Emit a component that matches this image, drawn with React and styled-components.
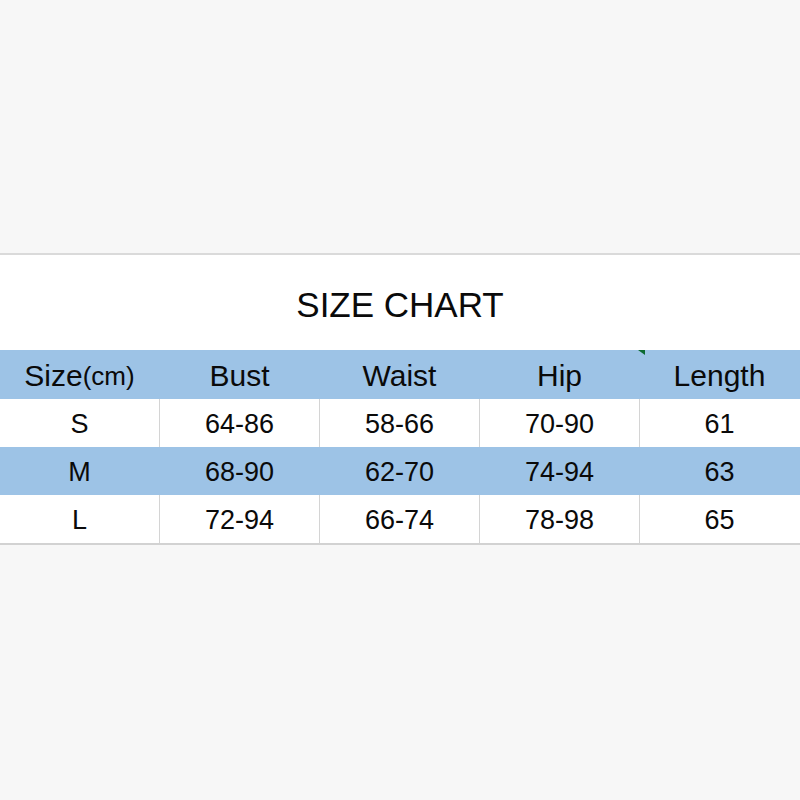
import React from "react";
import styled, { createGlobalStyle } from "styled-components";

const Global = createGlobalStyle`
  body {
    margin: 0;
    background: #f7f7f7;
    font-family: "Liberation Sans", Arial, sans-serif;
    color: #0a0a0a;
  }
`;

const Page = styled.div`
  padding-top: 253px;
  min-height: 800px;
  box-sizing: border-box;
`;

const Panel = styled.div`
  background: #fff;
  border-top: 2px solid #dadada;
  border-bottom: 2px solid #d2d2d2;
`;

const Title = styled.div`
  height: 95px;
  display: flex;
  align-items: center;
  justify-content: center;
  font-size: 35px;
  padding-top: 5px;
  box-sizing: border-box;
`;

const Table = styled.div`
  display: grid;
  grid-template-columns: repeat(5, 160px);
`;

const Row = styled.div`
  display: contents;
`;

const Cell = styled.div`
  position: relative;
  height: ${p => (p.head ? 49 : 48)}px;
  display: flex;
  align-items: center;
  justify-content: center;
  padding-top: 3px;
  font-size: ${p => (p.head ? 30 : 27)}px;
  background: ${p => (p.blue ? "#9dc3e6" : "#fff")};
  border-right: 1px solid
    ${p => (p.blue || p.last ? "transparent" : "#d4d4d4")};
  box-sizing: border-box;
`;

const Small = styled.span`
  font-size: 26px;
`;

const Marker = styled.div`
  position: absolute;
  top: 0;
  left: -2px;
  width: 0;
  height: 0;
  border-top: 5px solid #0c6a32;
  border-left: 7px solid transparent;
`;

const head = ["Size", "Bust", "Waist", "Hip", "Length"];

const rows = [
  ["S", "64-86", "58-66", "70-90", "61"],
  ["M", "68-90", "62-70", "74-94", "63"],
  ["L", "72-94", "66-74", "78-98", "65"]
];

const App = () => (
  <Page>
    <Global />
    <Panel>
      <Title>SIZE CHART</Title>
      <Table>
        <Row>
          {head.map((h, i) => (
            <Cell key={h} head blue>
              {i === 4 && <Marker />}
              {h}
              {i === 0 && <Small>(cm)</Small>}
            </Cell>
          ))}
        </Row>
        {rows.map((r, ri) => (
          <Row key={r[0]}>
            {r.map((v, i) => (
              <Cell key={i} blue={ri === 1} last={i === 4}>
                {v}
              </Cell>
            ))}
          </Row>
        ))}
      </Table>
    </Panel>
  </Page>
);

export default App;
